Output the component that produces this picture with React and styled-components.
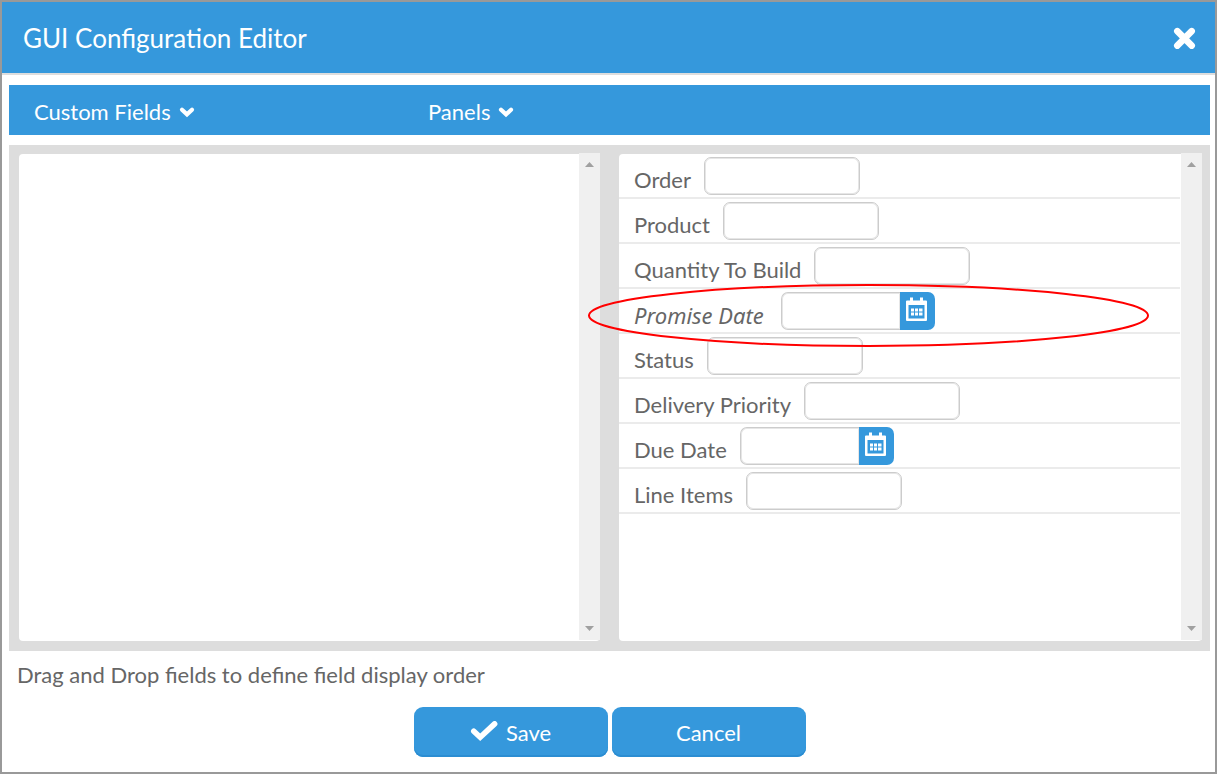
import React from "react";
import styled, { createGlobalStyle } from "styled-components";

const GlobalStyle = createGlobalStyle`
  *, *::before, *::after { box-sizing: border-box; }
  body {
    margin: 0;
    background: #fff;
    color: #666;
    font-family: Lato, "Noto Sans", sans-serif;
    font-size: 22px;
    line-height: 28px;
  }
  button, input { font: inherit; }
`;

const Dialog = styled.div`
  display: flex;
  flex-direction: column;
  min-height: 100vh;
  border: 2px solid #999;
`;

const TitleBar = styled.header`
  display: flex;
  align-items: center;
  justify-content: space-between;
  height: 73px;
  padding: 0 18px 0 21px;
  background: #3598dc;
  border-bottom: 2px solid #ddd;
  color: #fff;
`;

const Title = styled.h1`
  margin: 0;
  font-size: 26px;
  font-weight: 400;
  line-height: 36px;
`;

const IconButton = styled.button`
  display: flex;
  padding: 0;
  border: 0;
  background: none;
  color: inherit;
  cursor: pointer;
`;

const Body = styled.main`
  flex: 1;
  display: flex;
  flex-direction: column;
  padding: 10px 5px 15px 7px;
`;

const MenuBar = styled.nav`
  display: grid;
  grid-template-columns: 394px 1fr;
  align-items: center;
  height: 50px;
  margin-bottom: 10px;
  padding: 4px 25px 0;
  background: #3598dc;
`;

const MenuButton = styled.button`
  justify-self: start;
  display: flex;
  align-items: center;
  gap: 8px;
  padding: 0;
  border: 0;
  background: none;
  color: #fff;
  cursor: pointer;
`;

const Workspace = styled.section`
  flex: 1;
  display: grid;
  grid-template-columns: 581fr 583fr;
  gap: 19px;
  padding: 9px 8px 10px 10px;
  background: #ddd;
`;

const Pane = styled.div`
  display: flex;
  gap: 1px;
  min-height: 400px;
  background: #fff;
  border-radius: 4px;
`;

const PaneContent = styled.ul`
  flex: 1;
  margin: 0;
  padding: 0;
  list-style: none;
`;

const ScrollTrack = styled.div`
  display: flex;
  flex-direction: column;
  justify-content: space-between;
  align-items: center;
  width: 21px;
  margin: -1px 0 1px;
  padding: 9px 0;
  background: #f0f0f0;
`;

const FieldRow = styled.li`
  position: relative;
  display: flex;
  gap: 13px;
  height: 45px;
  padding: 3px 15px 2px;
  border-bottom: 2px solid #ebebeb;
`;

const FieldLabel = styled.label`
  padding-top: 9px;
  ${(p) => p.$italic && `
    min-width: 134px;
    font-family: "Noto Sans", sans-serif;
    font-style: italic;
  `}
`;

const FieldBox = styled.div`
  display: flex;
  height: 38px;
`;

const TextInput = styled.input`
  width: ${(p) => (p.$joined ? "119px" : "156px")};
  padding: 0 8px;
  border: 1px solid #ccc;
  border-right-width: ${(p) => (p.$joined ? "0" : "1px")};
  border-radius: ${(p) => (p.$joined ? "7px 0 0 7px" : "7px")};
  box-shadow: inset 0 0 0 1px #e6e6e6;
  background: #fff;
  color: inherit;
`;

const DateButton = styled.button`
  display: flex;
  align-items: flex-start;
  justify-content: center;
  width: 35px;
  padding: 5px 1px 0 0;
  border: 0;
  border-radius: 0 7px 7px 0;
  background: #3598dc;
  color: #fff;
  cursor: pointer;
`;

const Highlight = styled.svg`
  position: absolute;
  top: -5px;
  left: -31px;
  width: 100%;
  height: 63px;
  overflow: visible;
  pointer-events: none;
  z-index: 1;
`;

const Hint = styled.p`
  margin: 10px 8px 18px;
`;

const Actions = styled.footer`
  display: flex;
  justify-content: center;
  gap: 4px;
`;

const ActionButton = styled.button`
  display: flex;
  align-items: center;
  justify-content: center;
  gap: 8px;
  width: 194px;
  height: 50px;
  padding: 2px 0 0;
  border: 0;
  border-radius: 9px;
  background: #3598dc;
  box-shadow: inset 0 -2px 0 #2b8dd2;
  color: #fff;
  cursor: pointer;
`;

const CloseIcon = () => (
  <svg width="23" height="23" viewBox="0 0 23 23" overflow="visible" aria-hidden="true">
    <path d="M3.3 5.2L17.7 19.6M17.7 5.2L3.3 19.6" stroke="currentColor" strokeWidth="6.6" strokeLinecap="round" />
  </svg>
);

const ChevronIcon = () => (
  <svg width="16" height="12" viewBox="0 0 16 12" aria-hidden="true">
    <path d="M3 3.7L8 8.4L13 3.7" fill="none" stroke="currentColor" strokeWidth="4.2" strokeLinecap="round" />
  </svg>
);

const CheckIcon = () => (
  <svg width="28" height="24" viewBox="0 0 28 24" aria-hidden="true">
    <path d="M3.8 10.2L10.2 16.2L24.6 2.9" fill="none" stroke="currentColor" strokeWidth="5.6" strokeLinecap="round" />
  </svg>
);

const CalendarIcon = () => (
  <svg width="22" height="25" viewBox="0 0 22 25" fill="currentColor" aria-hidden="true">
    <path fillRule="evenodd" d="M1 3.5H4V0.5H7V3.5H14V0.5H17V3.5H20Q21 3.5 21 4.5V23Q21 24 20 24H1Q0 24 0 23V4.5Q0 3.5 1 3.5ZM2.5 8V21.5H18.5V8Z" />
    <path d="M5 11.5h3v3h-3zM9 11.5h3v3h-3zM13 11.5h3.5v3h-3.5zM5 15.5h3v3h-3zM9 15.5h3v3h-3zM13 15.5h3.5v3h-3.5z" />
  </svg>
);

const ArrowIcon = ({ down }) => (
  <svg width="9" height="5" viewBox="0 0 9 5" fill="#a0a0a0" aria-hidden="true">
    <path d={down ? "M0 0H9L4.5 5Z" : "M0 5H9L4.5 0Z"} />
  </svg>
);

const ScrollBar = () => (
  <ScrollTrack>
    <ArrowIcon />
    <ArrowIcon down />
  </ScrollTrack>
);

const fields = [
  { id: "order", label: "Order" },
  { id: "product", label: "Product" },
  { id: "quantity", label: "Quantity To Build" },
  { id: "promise", label: "Promise Date", date: true, highlighted: true },
  { id: "status", label: "Status" },
  { id: "priority", label: "Delivery Priority" },
  { id: "due", label: "Due Date", date: true },
  { id: "items", label: "Line Items" },
];

const Field = ({ id, label, date, highlighted }) => (
  <FieldRow>
    <FieldLabel htmlFor={id} $italic={highlighted}>{label}</FieldLabel>
    <FieldBox>
      <TextInput id={id} type="text" $joined={date} />
      {date && (
        <DateButton type="button" aria-label={`Choose ${label}`}>
          <CalendarIcon />
        </DateButton>
      )}
    </FieldBox>
    {highlighted && (
      <Highlight viewBox="0 0 561 63" preserveAspectRatio="none" aria-hidden="true">
        <ellipse cx="280.5" cy="31.5" rx="279.5" ry="30.5" fill="none" stroke="#f00" strokeWidth="2" vectorEffect="non-scaling-stroke" />
      </Highlight>
    )}
  </FieldRow>
);

export default function App() {
  return (
    <>
      <GlobalStyle />
      <Dialog role="dialog" aria-labelledby="dialog-title">
        <TitleBar>
          <Title id="dialog-title">GUI Configuration Editor</Title>
          <IconButton type="button" aria-label="Close">
            <CloseIcon />
          </IconButton>
        </TitleBar>
        <Body>
          <MenuBar>
            <MenuButton type="button">Custom Fields<ChevronIcon /></MenuButton>
            <MenuButton type="button">Panels<ChevronIcon /></MenuButton>
          </MenuBar>
          <Workspace>
            <Pane>
              <PaneContent />
              <ScrollBar />
            </Pane>
            <Pane>
              <PaneContent>
                {fields.map((field) => <Field key={field.id} {...field} />)}
              </PaneContent>
              <ScrollBar />
            </Pane>
          </Workspace>
          <Hint>Drag and Drop fields to define field display order</Hint>
          <Actions>
            <ActionButton type="button"><CheckIcon />Save</ActionButton>
            <ActionButton type="button">Cancel</ActionButton>
          </Actions>
        </Body>
      </Dialog>
    </>
  );
}
